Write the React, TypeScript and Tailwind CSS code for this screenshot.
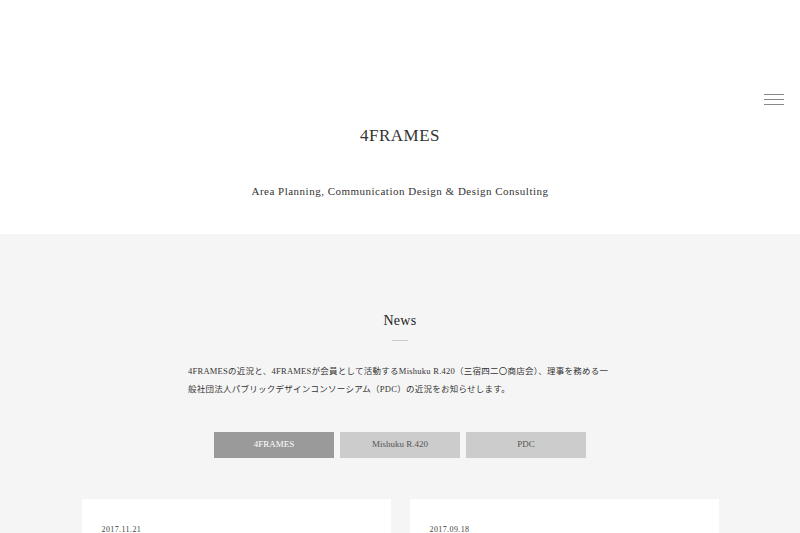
import React from "react";

const serif = { fontFamily: '"Liberation Serif", "Noto Sans CJK JP", serif' };

const tabs = [
  { label: "4FRAMES", active: true },
  { label: "Mishuku R.420", active: false },
  { label: "PDC", active: false },
];

const posts = [{ date: "2017.11.21" }, { date: "2017.09.18" }];

export default function App() {
  return (
    <div className="w-full min-h-[533px] bg-[#f5f5f5] text-[#333]" style={serif}>
      <header className="relative h-[234px] bg-white flex flex-col items-center pt-[125px]">
        <h1 className="text-[17px] leading-[22px] tracking-[0.03em] text-[#333]">4FRAMES</h1>
        <p className="mt-[36px] text-[11px] leading-[16px] tracking-[0.045em] text-[#333]">
          Area Planning, Communication Design &amp; Design Consulting
        </p>
        <button className="absolute right-[16px] top-[94px] flex flex-col gap-[4px] w-[20px]">
          <span className="block h-px w-full bg-[#888]" />
          <span className="block h-px w-full bg-[#888]" />
          <span className="block h-px w-full bg-[#888]" />
        </button>
      </header>

      <section className="flex flex-col items-center pt-[77px]">
        <h2 className="text-[14px] leading-[20px] tracking-[0.02em] text-[#222]">News</h2>
        <span className="mt-[9px] block h-px w-[16px] bg-[#ccc]" />
        <p className="mt-[21px] w-[424px] text-[8.5px] leading-[18px] tracking-[0.03em] text-[#333] whitespace-nowrap">
          4FRAMESの近況と、4FRAMESが会員として活動するMishuku R.420（三宿四二〇商店会）、理事を務める一
          <br />
          般社団法人パブリックデザインコンソーシアム（PDC）の近況をお知らせします。
        </p>

        <div className="mt-[34px] flex gap-[6px]">
          {tabs.map((t) => (
            <button
              key={t.label}
              className={
                t.active
                  ? "w-[120px] h-[26px] bg-[#9a9a9a] text-white text-[9px]"
                  : "w-[120px] h-[26px] bg-[#cccccc] text-[#555] text-[9px]"
              }
              style={serif}
            >
              {t.label}
            </button>
          ))}
        </div>

        <div className="mt-[41px] flex gap-[19px]">
          {posts.map((p) => (
            <article key={p.date} className="w-[309px] h-[80px] bg-white px-[20px] pt-[25px]">
              <time className="block text-[8px] leading-[12px] tracking-[0.05em] text-[#444]">{p.date}</time>
            </article>
          ))}
        </div>
      </section>
    </div>
  );
}
